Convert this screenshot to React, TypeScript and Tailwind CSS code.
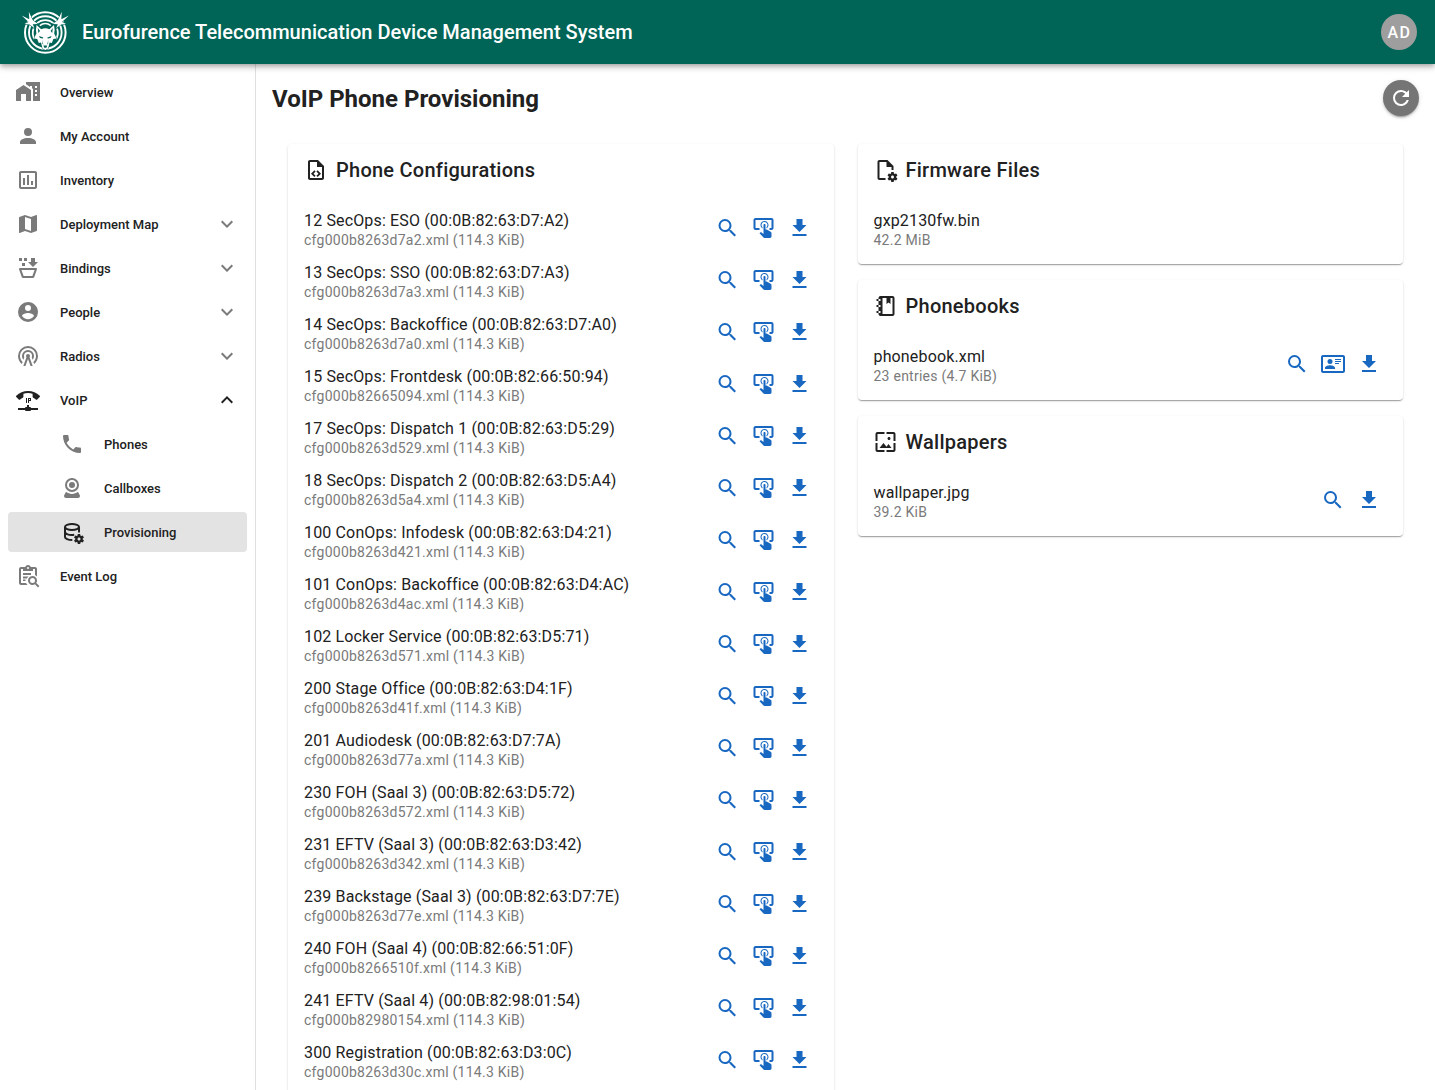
import React from 'react';

const P = {
  homeCity: 'M0,21V10L7.5,5L15,10V21H10V14H5V21H0M24,2V21H17V8.93L16,8.27V6H14V6.93L10,4.27V2H24M21,14H19V16H21V14M21,10H19V12H21V10M21,6H19V8H21V6Z',
  account: 'M12,4A4,4 0 0,1 16,8A4,4 0 0,1 12,12A4,4 0 0,1 8,8A4,4 0 0,1 12,4M12,14C16.42,14 20,15.79 20,18V20H4V18C4,15.79 7.58,14 12,14Z',
  chart: 'M9 17H7V10H9V17M13 17H11V7H13V17M17 17H15V13H17V17M19 19H5V5H19V19.1M19 3H5C3.9 3 3 3.9 3 5V19C3 20.1 3.9 21 5 21H19C20.1 21 21 20.1 21 19V5C21 3.9 20.1 3 19 3Z',
  map: 'M15,19L9,16.89V5L15,7.11M20.5,3C20.44,3 20.39,3 20.34,3L15,5.1L9,3L3.36,4.9C3.15,4.97 3,5.15 3,5.38V20.5A0.5,0.5 0 0,0 3.5,21C3.55,21 3.61,21 3.66,20.97L9,18.9L15,21L20.64,19.1C20.85,19 21,18.85 21,18.62V3.5A0.5,0.5 0 0,0 20.5,3Z',
  basket: 'M3 2H6V5H3V2M6 7H9V10H6V7M8 2H11V5H8V2M17 11L12 6H15V2H19V6H22L17 11M7.5 22C6.72 22 6.04 21.55 5.71 20.9L3.1 13.44C3 13.3 3 13.15 3 13A1 1 0 0 1 4 12H20A1 1 0 0 1 21 13C21 13.15 20.97 13.29 20.9 13.42L18.29 20.9C17.96 21.55 17.28 22 16.5 22H7.5M7.61 20H16.39L18.57 14H5.42L7.61 20Z',
  people: 'M12,19.2C9.5,19.2 7.29,17.92 6,16C6.03,14 10,12.9 12,12.9C14,12.9 17.97,14 18,16C16.71,17.92 14.5,19.2 12,19.2M12,5A3,3 0 0,1 15,8A3,3 0 0,1 12,11A3,3 0 0,1 9,8A3,3 0 0,1 12,5M12,2A10,10 0 0,0 2,12A10,10 0 0,0 12,22A10,10 0 0,0 22,12C22,6.47 17.5,2 12,2Z',
  radio: 'M12,10A2,2 0 0,1 14,12C14,12.5 13.82,12.94 13.53,13.29L16.7,22H14.57L12,14.93L9.43,22H7.3L10.47,13.29C10.18,12.94 10,12.5 10,12A2,2 0 0,1 12,10M12,8A4,4 0 0,0 8,12C8,12.5 8.1,13 8.28,13.46L7.4,15.86C6.53,14.81 6,13.47 6,12A6,6 0 0,1 12,6A6,6 0 0,1 18,12C18,13.47 17.47,14.81 16.6,15.86L15.72,13.46C15.9,13 16,12.5 16,12A4,4 0 0,0 12,8M12,4A8,8 0 0,0 4,12C4,14.36 5,16.5 6.64,17.94L5.92,19.94C3.54,18.11 2,15.23 2,12A10,10 0 0,1 12,2A10,10 0 0,1 22,12C22,15.23 20.46,18.11 18.08,19.94L17.36,17.94C19,16.5 20,14.36 20,12A8,8 0 0,0 12,4Z',
  voip: 'M13,17V19H14A1,1 0 0,1 15,20H22V22H15A1,1 0 0,1 14,23H10A1,1 0 0,1 9,22H2V20H9A1,1 0 0,1 10,19H11V17H13M23.7,7.67C23.88,7.85 24,8.09 24,8.37C24,8.65 23.89,8.9 23.7,9.08L21.22,11.56C21.04,11.74 20.79,11.85 20.5,11.85C20.24,11.85 20,11.75 19.81,11.57C19,10.84 18.12,10.21 17.16,9.72C16.83,9.56 16.6,9.22 16.6,8.82V5.72C15.15,5.25 13.6,5 12,5C10.4,5 8.85,5.25 7.4,5.73V8.83C7.4,9.23 7.17,9.57 6.84,9.73C5.87,10.22 4.97,10.84 4.18,11.57C4,11.75 3.75,11.86 3.5,11.86C3.2,11.86 2.95,11.75 2.77,11.57L0.29,9.09C0.11,8.9 0,8.65 0,8.37C0,8.09 0.11,7.85 0.29,7.67C3.34,4.78 7.46,3 12,3C16.53,3 20.65,4.78 23.7,7.67M11,10V15H10V10H11M12,10H15V13H13V15H12V10M14,12V11H13V12H14Z',
  phone: 'M6.62,10.79C8.06,13.62 10.38,15.94 13.21,17.38L15.41,15.18C15.69,14.9 16.08,14.82 16.43,14.93C17.55,15.3 18.75,15.5 20,15.5A1,1 0 0,1 21,16.5V20A1,1 0 0,1 20,21A17,17 0 0,1 3,4A1,1 0 0,1 4,3H7.5A1,1 0 0,1 8.5,4C8.5,5.25 8.7,6.45 9.07,7.57C9.18,7.92 9.1,8.31 8.82,8.59L6.62,10.79Z',
  webcam: 'M12,2A7,7 0 0,1 19,9A7,7 0 0,1 12,16A7,7 0 0,1 5,9A7,7 0 0,1 12,2M12,4A5,5 0 0,0 7,9A5,5 0 0,0 12,14A5,5 0 0,0 17,9A5,5 0 0,0 12,4M12,6A3,3 0 0,1 15,9A3,3 0 0,1 12,12A3,3 0 0,1 9,9A3,3 0 0,1 12,6M6,22A2,2 0 0,1 4,20C4,19.62 4.1,19.27 4.29,18.97L6.11,15.81C7.69,17.17 9.75,18 12,18C14.25,18 16.31,17.17 17.89,15.81L19.71,18.97C19.9,19.27 20,19.62 20,20A2,2 0 0,1 18,22H6Z',
  gear: 'M18 14C17.87 14 17.76 14.09 17.74 14.21L17.55 15.53C17.25 15.66 16.96 15.82 16.7 16L15.46 15.5C15.35 15.5 15.22 15.5 15.15 15.63L14.15 17.36C14.09 17.47 14.11 17.6 14.21 17.68L15.27 18.5C15.25 18.67 15.24 18.83 15.24 19C15.24 19.17 15.25 19.33 15.27 19.5L14.21 20.32C14.12 20.4 14.09 20.53 14.15 20.64L15.15 22.37C15.21 22.5 15.34 22.5 15.46 22.5L16.7 22C16.96 22.18 17.24 22.35 17.55 22.47L17.74 23.79C17.76 23.91 17.86 24 18 24H20C20.11 24 20.22 23.91 20.24 23.79L20.43 22.47C20.73 22.34 21 22.18 21.27 22L22.5 22.5C22.63 22.5 22.76 22.5 22.83 22.37L23.83 20.64C23.89 20.53 23.86 20.4 23.77 20.32L22.7 19.5C22.72 19.33 22.74 19.17 22.74 19C22.74 18.83 22.73 18.67 22.7 18.5L23.76 17.68C23.85 17.6 23.88 17.47 23.82 17.36L22.82 15.63C22.76 15.5 22.63 15.5 22.5 15.5L21.27 16C21 15.82 20.73 15.65 20.42 15.53L20.23 14.21C20.22 14.09 20.11 14 20 14M19 17.5C19.83 17.5 20.5 18.17 20.5 19C20.5 19.83 19.83 20.5 19 20.5C18.16 20.5 17.5 19.83 17.5 19C17.5 18.17 18.17 17.5 19 17.5Z',
  fileOpen: 'M6 2C4.89 2 4 2.9 4 4V20C4 21.11 4.89 22 6 22H12V20H6V4H13V9H18V12H20V8L14 2Z',
  fileCode: 'M14 2H6C4.89 2 4 2.9 4 4V20C4 21.11 4.89 22 6 22H18C19.11 22 20 21.11 20 20V8L14 2M18 20H6V4H13V9H18V20M9.54 15.65L11.63 17.74L10.35 19L7 15.65L10.35 12.3L11.63 13.56L9.54 15.65M17 15.65L13.65 19L12.38 17.74L14.47 15.65L12.38 13.56L13.65 12.3L17 15.65Z',
  clipSearch: 'M5 3C3.9 3 3 3.9 3 5V19C3 20.1 3.9 21 5 21H11.5C10.9 20.4 10.4 19.7 10.1 19H5V5H7V7H17V5H19V11C19.8 11.4 20.5 11.9 21 12.5V5C21 3.9 20.1 3 19 3H14.8C14.4 1.8 13.3 1 12 1S9.6 1.8 9.2 3H5M12 3A1 1 0 1 1 12 5A1 1 0 1 1 12 3M7 9V11H15V9H7M7 12.5V14.500H11C11.4 13.6 12 12.9 12.7 12.5H7M7 15.500V17H9.500V15.500H7M16.5 12A4.5 4.5 0 1 0 18.9 20.3L22 23.4L23.4 22L20.3 18.9A4.5 4.5 0 0 0 16.5 12M16.5 14A2.5 2.5 0 1 1 16.5 19A2.5 2.5 0 1 1 16.5 14Z',
  notebook: 'M3 7V5H5V4C5 2.9 5.9 2 7 2H19C20.05 2 21 2.95 21 4V20C21 21.05 20.05 22 19 22H7C5.95 22 5 21.05 5 20V19H3V17H5V13H3V11H5V7H3M5 5V7H7V5H5M5 19H7V17H5V19M5 13H7V11H5V13M9 4V20H19V4H17V10L15 8.5L13 10V4H9Z',
  wallpaper: 'M4 4h7V2H4c-1.1 0-2 .9-2 2v7h2V4zm6 9l-4 5h12l-3-4-2.03 2.71L10 13zm7-4.5c0-.83-.67-1.5-1.5-1.5S14 7.67 14 8.5s.67 1.5 1.5 1.5S17 9.33 17 8.5zM20 2h-7v2h7v7h2V4c0-1.1-.9-2-2-2zm0 18h-7v2h7c1.1 0 2-.9 2-2v-7h-2v7zM4 13H2v7c0 1.1.9 2 2 2h7v-2H4v-7z',
  magnify: 'M9.5,3A6.5,6.5 0 0,1 16,9.5C16,11.11 15.41,12.59 14.44,13.73L14.71,14H15.5L20.5,19L19,20.5L14,15.5V14.71L13.73,14.44C12.59,15.41 11.11,16 9.5,16A6.5,6.5 0 0,1 3,9.5A6.5,6.5 0 0,1 9.5,3M9.5,5C7,5 5,7 5,9.5C5,12 7,14 9.5,14C12,14 14,12 14,9.5C14,7 12,5 9.5,5Z',
  tap: 'M13 5C15.21 5 17 6.79 17 9C17 10.5 16.2 11.77 15 12.46V11.24C15.61 10.69 16 9.89 16 9C16 7.34 14.66 6 13 6S10 7.34 10 9C10 9.89 10.39 10.69 11 11.24V12.46C9.8 11.77 9 10.5 9 9C9 6.79 10.79 5 13 5M20 20.5C19.97 21.32 19.32 21.97 18.5 22H13C12.62 22 12.26 21.85 12 21.57L8 17.37L8.74 16.6C8.93 16.39 9.2 16.28 9.5 16.28H9.7L12 18V9C12 8.45 12.45 8 13 8S14 8.45 14 9V13.47L15.21 13.6L19.15 15.79C19.68 16.03 20 16.56 20 17.14V20.5M20 2H4C2.9 2 2 2.9 2 4V12C2 13.11 2.9 14 4 14H8V12L4 12L4 4H20L20 12H18V14H20V13.99L20 14C21.11 14 22 13.11 22 12V4C22 2.9 21.11 2 20 2Z',
  download: 'M5,20H19V18H5M19,9H15V3H9V9H5L12,16L19,9Z',
  card: 'M22,3H2C0.91,3.04 0.04,3.91 0,5V19C0.04,20.09 0.91,20.96 2,21H22C23.09,20.96 23.96,20.09 24,19V5C23.96,3.91 23.09,3.04 22,3M22,19H2V5H22V19M14,17V15.75C14,14.09 10.66,13.25 9,13.25C7.34,13.25 4,14.09 4,15.75V17H14M9,7A2.5,2.5 0 0,0 6.5,9.5A2.5,2.5 0 0,0 9,12A2.5,2.5 0 0,0 11.5,9.5A2.5,2.5 0 0,0 9,7M14,7V8H20V7H14M14,9V10H20V9H14M14,11V12H18V11H14',
  refresh: 'M17.65,6.35C16.2,4.9 14.21,4 12,4A8,8 0 0,0 4,12A8,8 0 0,0 12,20C15.73,20 18.84,17.45 19.73,14H17.65C16.83,16.33 14.61,18 12,18A6,6 0 0,1 6,12A6,6 0 0,1 12,6C13.66,6 15.14,6.69 16.22,7.78L13,11H20V4L17.65,6.35Z',
  down: 'M7.41,8.58L12,13.17L16.59,8.58L18,10L12,16L6,10L7.41,8.58Z',
  up: 'M7.41,15.41L12,10.83L16.59,15.41L18,14L12,8L6,14L7.41,15.41Z',
};

function Icon({ d, className = '', children }: { d?: string; className?: string; children?: React.ReactNode }) {
  return (
    <svg viewBox="0 0 24 24" fill="currentColor" fillRule="nonzero" className={`block size-6 shrink-0 overflow-visible ${className}`}>
      {d && <path d={d} />}
      {children}
    </svg>
  );
}

const DatabaseCog = () => (
  <Icon d={P.gear}>
    <g fill="none" stroke="currentColor" strokeWidth="2">
      <ellipse cx="12" cy="7" rx="7" ry="3" />
      <path d="M5 7V17C5 18.5 8 20 12.3 20M19 7V12.5M5 12C5.6 13.8 8.6 15 12 15C12.8 15 13.5 14.9 14.2 14.8" />
    </g>
  </Icon>
);

const FileCog = () => (
  <Icon d={P.fileOpen} className="[&>path]:-translate-x-[0.5px]">
    <path d={P.gear} />
  </Icon>
);

const BOLT = 'M0.7 5.500L8.300 9.200L7.800 1.800L11.800 10.200L17 14L11.800 14.200L13.500 18.200L8.600 14.600L3.500 14L7.600 12Z';

function Logo() {
  return (
    <svg viewBox="0 0 48 44" className="block h-11 w-12 shrink-0" fill="none">
      <circle cx="24.300" cy="22.500" r="20.300" stroke="#fff" strokeWidth="2" />
      <circle cx="24.300" cy="22.500" r="16.300" stroke="#fff" strokeWidth="1.900" />
      <path d="M16 13.200A12.500 12.500 0 0 1 32.600 13.200M13.500 29A12.500 12.500 0 0 1 12.500 18.500M35.100 29A12.500 12.500 0 0 0 36.100 18.500" stroke="#fff" strokeWidth="1.800" />
      <path d="M18.800 15.600A8.800 8.800 0 0 1 29.800 15.600" stroke="#fff" strokeWidth="1.600" />
      <g fill="#fff" stroke="#006557" strokeWidth="1" paintOrder="stroke">
        <path d={BOLT} />
        <path d={BOLT} transform="translate(48.600 0) scale(-1 1)" />
      </g>
      <path d="M15.600 15L20.200 19.200Q24.300 17.300 28.400 19.200L33 15Q34.200 20 33.200 23.600L35.600 28.500L32.400 29L30.800 33L28.600 32.600L27.100 38.500L24.300 40L21.500 38.500L20 32.600L17.800 33L16.200 29L13 28.500L15.400 23.600Q14.400 20 15.600 15Z" fill="#fff" stroke="#006557" strokeWidth="1" paintOrder="stroke" />
      <path d="M16.800 18L19 20.900L17.400 23ZM31.800 18L29.600 20.900L31.200 23ZM18 26L22.300 27.400L21.900 28.600L19 28.100ZM30.600 26L26.300 27.400L26.700 28.600L29.600 28.100ZM22.400 35.600H26.200L25.400 37.800H23.200ZM21.400 30L22.300 34.500L21.500 34ZM27.200 30L26.300 34.500L27.100 34Z" fill="#006557" />
    </svg>
  );
}

type NavItem = { label: string; icon: React.ReactNode; chevron?: 'down' | 'up'; child?: boolean; active?: boolean };

const nav: NavItem[] = [
  { label: 'Overview', icon: <Icon d={P.homeCity} /> },
  { label: 'My Account', icon: <Icon d={P.account} /> },
  { label: 'Inventory', icon: <Icon d={P.chart} /> },
  { label: 'Deployment Map', icon: <Icon d={P.map} />, chevron: 'down' },
  { label: 'Bindings', icon: <Icon d={P.basket} />, chevron: 'down' },
  { label: 'People', icon: <Icon d={P.people} />, chevron: 'down' },
  { label: 'Radios', icon: <Icon d={P.radio} />, chevron: 'down' },
  { label: 'VoIP', icon: <Icon d={P.voip} />, chevron: 'up' },
  { label: 'Phones', icon: <Icon d={P.phone} />, child: true },
  { label: 'Callboxes', icon: <Icon d={P.webcam} />, child: true },
  { label: 'Provisioning', icon: <DatabaseCog />, child: true, active: true },
  { label: 'Event Log', icon: <Icon d={P.clipSearch} /> },
];

const phones = [
  ['12 SecOps: ESO (00:0B:82:63:D7:A2)', 'cfg000b8263d7a2.xml'],
  ['13 SecOps: SSO (00:0B:82:63:D7:A3)', 'cfg000b8263d7a3.xml'],
  ['14 SecOps: Backoffice (00:0B:82:63:D7:A0)', 'cfg000b8263d7a0.xml'],
  ['15 SecOps: Frontdesk (00:0B:82:66:50:94)', 'cfg000b82665094.xml'],
  ['17 SecOps: Dispatch 1 (00:0B:82:63:D5:29)', 'cfg000b8263d529.xml'],
  ['18 SecOps: Dispatch 2 (00:0B:82:63:D5:A4)', 'cfg000b8263d5a4.xml'],
  ['100 ConOps: Infodesk (00:0B:82:63:D4:21)', 'cfg000b8263d421.xml'],
  ['101 ConOps: Backoffice (00:0B:82:63:D4:AC)', 'cfg000b8263d4ac.xml'],
  ['102 Locker Service (00:0B:82:63:D5:71)', 'cfg000b8263d571.xml'],
  ['200 Stage Office (00:0B:82:63:D4:1F)', 'cfg000b8263d41f.xml'],
  ['201 Audiodesk (00:0B:82:63:D7:7A)', 'cfg000b8263d77a.xml'],
  ['230 FOH (Saal 3) (00:0B:82:63:D5:72)', 'cfg000b8263d572.xml'],
  ['231 EFTV (Saal 3) (00:0B:82:63:D3:42)', 'cfg000b8263d342.xml'],
  ['239 Backstage (Saal 3) (00:0B:82:63:D7:7E)', 'cfg000b8263d77e.xml'],
  ['240 FOH (Saal 4) (00:0B:82:66:51:0F)', 'cfg000b8266510f.xml'],
  ['241 EFTV (Saal 4) (00:0B:82:98:01:54)', 'cfg000b82980154.xml'],
  ['300 Registration (00:0B:82:63:D3:0C)', 'cfg000b8263d30c.xml'],
];

function Card({ icon, title, children }: { icon: React.ReactNode; title: string; children: React.ReactNode }) {
  return (
    <section className="rounded bg-white pb-2.5 shadow-[0_2px_1px_-1px_rgba(0,0,0,0.2),0_1px_1px_0_rgba(0,0,0,0.14),0_1px_3px_0_rgba(0,0,0,0.12)]">
      <header className="flex h-[58px] items-start px-4 pt-[14px]">
        {icon}
        <h2 className="ml-2 text-xl leading-6 font-medium tracking-[0.0125em]">{title}</h2>
      </header>
      {children}
    </section>
  );
}

function Row({ title, sub, actions = [], iconClass }: { title: string; sub: string; actions?: string[]; iconClass?: string }) {
  return (
    <div className="flex h-[52px] justify-between pr-[22px] pl-4">
      <div className="pt-[9px] whitespace-nowrap">
        <div className="text-base leading-5 tracking-[0.009375em]">{title}</div>
        <div className="-mt-px text-sm leading-5 tracking-[0.0178571em] text-[#7a7a7a]">{sub}</div>
      </div>
      <div className="flex items-center gap-3 text-[#1867c0]">
        {actions.map((a, i) => (
          <button key={i}>
            <Icon d={a} className={iconClass} />
          </button>
        ))}
      </div>
    </div>
  );
}

export default function App() {
  return (
    <div className="flex h-[1090px] flex-col overflow-hidden bg-white font-['Roboto',sans-serif] text-[#212121]">
      <header className="relative z-10 flex h-16 shrink-0 items-center bg-[#006557] pr-[18px] pl-[21px] text-white shadow-[0_2px_4px_-1px_rgba(0,0,0,0.2),0_4px_5px_0_rgba(0,0,0,0.14),0_1px_10px_0_rgba(0,0,0,0.12)]">
        <Logo />
        <h1 className="ml-[13px] flex-1 text-xl leading-7 font-medium tracking-[0.01px] whitespace-nowrap">Eurofurence Telecommunication Device Management System</h1>
        <div className="flex size-9 items-center justify-center rounded-full bg-[#9e9e9e] pt-0.5 pl-px text-base font-medium tracking-[0.0892857em]">AD</div>
      </header>
      <div className="flex min-h-0 flex-1">
        <nav className="flex w-64 shrink-0 flex-col gap-1 border-r border-[#e0e0e0] p-2">
          {nav.map((n) => (
            <a
              key={n.label}
              className={`flex h-10 shrink-0 items-center rounded pr-2 ${n.child ? 'pl-[52px]' : 'pl-2'} ${n.active ? 'bg-[#e3e3e3]' : ''}`}
            >
              <span className={n.active || n.chevron === 'up' ? 'text-[#212121]' : 'text-[#7a7a7a]'}>{n.icon}</span>
              <span className="ml-5 flex-1 pt-0.5 text-[13px] leading-5 font-medium">{n.label}</span>
              {n.chevron && (
                <span className={n.chevron === 'up' ? 'text-[#212121]' : 'text-[#7a7a7a]'}>
                  <Icon d={P[n.chevron]} />
                </span>
              )}
            </a>
          ))}
        </nav>
        <main className="min-w-0 flex-1 p-4">
          <div className="flex h-9 items-center justify-between">
            <h1 className="pt-0.5 text-2xl leading-8 font-bold">VoIP Phone Provisioning</h1>
            <button className="flex size-9 items-center justify-center rounded-full bg-[#757575] text-white shadow-[0_3px_1px_-2px_rgba(0,0,0,0.2),0_2px_2px_0_rgba(0,0,0,0.14),0_1px_5px_0_rgba(0,0,0,0.12)]">
              <Icon d={P.refresh} />
            </button>
          </div>
          <div className="mt-7 grid grid-cols-2 items-start gap-6 px-4">
            <Card icon={<Icon d={P.fileCode} />} title="Phone Configurations">
              {phones.map(([title, file]) => (
                <Row
                  key={file}
                  title={title}
                  sub={`${file} (114.3 KiB)`}
                  actions={[P.magnify, P.tap, P.download]}
                  iconClass="[&>path]:-translate-x-[0.5px]"
                />
              ))}
            </Card>
            <div className="flex flex-col gap-4">
              <Card icon={<FileCog />} title="Firmware Files">
                <Row title="gxp2130fw.bin" sub="42.2 MiB" />
              </Card>
              <Card icon={<Icon d={P.notebook} className="[&>path]:-translate-x-[0.5px]" />} title="Phonebooks">
                <Row title="phonebook.xml" sub="23 entries (4.7 KiB)" actions={[P.magnify, P.card, P.download]} />
              </Card>
              <Card icon={<Icon d={P.wallpaper} className="[&>path]:-translate-x-[0.5px]" />} title="Wallpapers">
                <Row title="wallpaper.jpg" sub="39.2 KiB" actions={[P.magnify, P.download]} />
              </Card>
            </div>
          </div>
        </main>
      </div>
    </div>
  );
}
